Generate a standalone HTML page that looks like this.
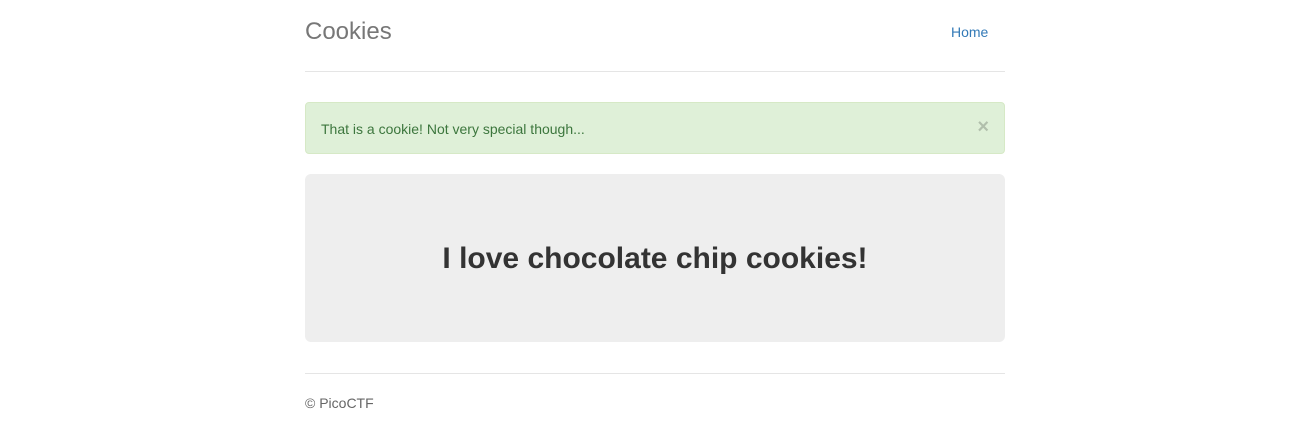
<!DOCTYPE html>
<html><head><meta charset="utf-8"><style>
body{margin:0;background:#fff;font-family:"Liberation Sans",Arial,sans-serif;font-size:14px;color:#333;width:1315px;height:434px;overflow:hidden;position:relative}
.c{position:absolute;left:305px;width:700px}
.title{top:19px;font-size:24px;color:#777;line-height:26px}
.home{position:absolute;left:951px;top:24px;color:#337ab7;font-size:14px;line-height:16px}
.hr1{top:71px;height:0;border-top:1px solid #e5e5e5}
.alert{top:102px;height:52px;background:#dff0d8;border:1px solid #d6e9c6;border-radius:4px;color:#3c763d;box-sizing:border-box;width:700px}
.alert span{position:absolute;left:15px;top:18px;line-height:16px}
.alert b{position:absolute;right:15px;top:14px;font-size:20px;color:#000;opacity:.2;line-height:20px}
.jumbo{top:174px;height:168px;background:#eee;border-radius:6px;text-align:center}
.jumbo h1{margin:0;position:absolute;width:100%;top:68px;font-size:30px;line-height:34px;font-weight:bold}
.hr2{top:373px;border-top:1px solid #e5e5e5}
.foot{top:395px;color:#666;line-height:16px}
</style></head><body>
<div class="c title">Cookies</div>
<div class="home">Home</div>
<div class="c hr1"></div>
<div class="c alert"><span>That is a cookie! Not very special though...</span><b>×</b></div>
<div class="c jumbo"><h1>I love chocolate chip cookies!</h1></div>
<div class="c hr2"></div>
<div class="c foot">© PicoCTF</div>
</body></html>
